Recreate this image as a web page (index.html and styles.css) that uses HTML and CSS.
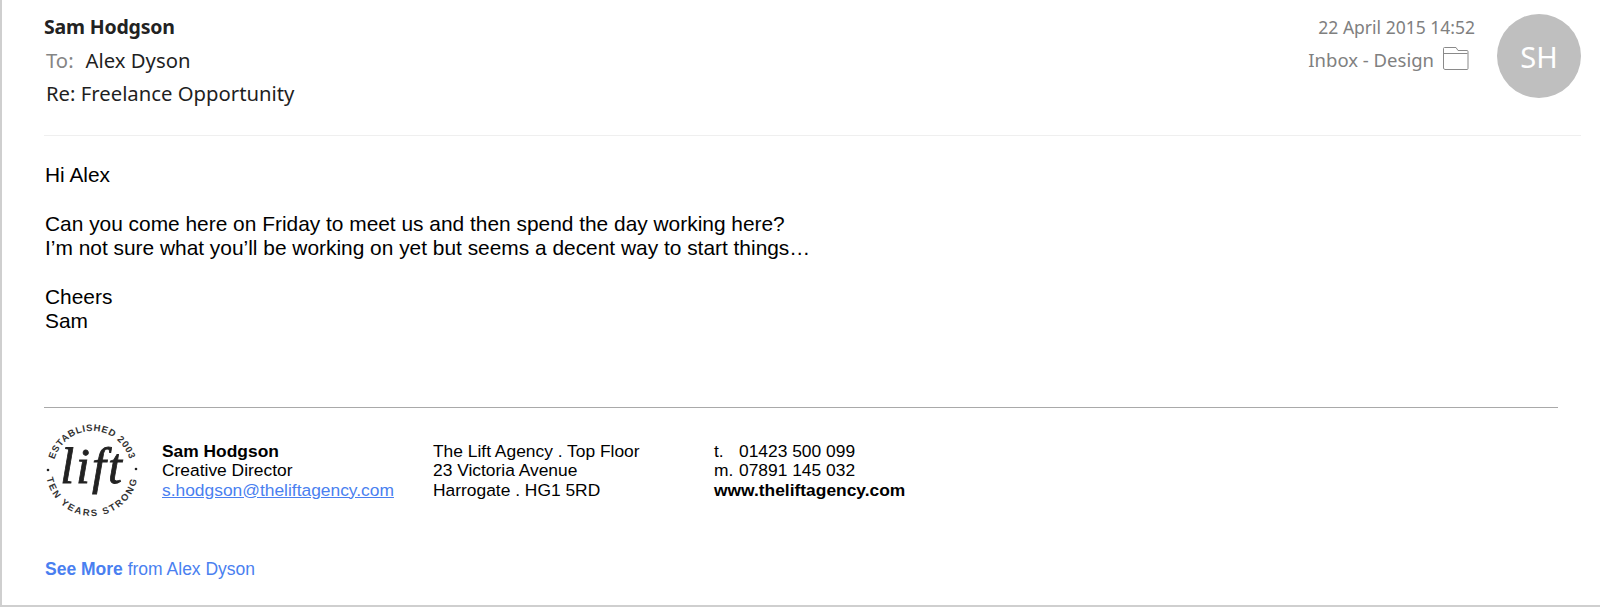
FILE: index.html
```html
<!DOCTYPE html>
<html lang="en">
<head>
<meta charset="utf-8">
<title>Re: Freelance Opportunity</title>
<link rel="stylesheet" href="styles.css">
</head>
<body>
<main class="mail">
  <header class="head">
    <div class="meta">
      <div class="sender">Sam Hodgson</div>
      <div class="to"><span class="to-label">To:</span><span>Alex Dyson</span></div>
      <div class="subject">Re: Freelance Opportunity</div>
    </div>
    <div class="info">
      <div class="date">22 April 2015 14:52</div>
      <div class="folder">Inbox - Design
        <svg class="folder-icon" width="27" height="24" viewBox="0 0 27 24" fill="none" stroke="#8a8a8a" stroke-width="1"><path d="M1.500 21.500V1.500a1 1 0 0 1 1-1h11.500l2 3h9a1 1 0 0 1 1 1v17a1 1 0 0 1-1 1h-22a1 1 0 0 1-1-1z"/><path d="M1.500 6.500h24"/></svg>
      </div>
    </div>
    <div class="avatar">SH</div>
  </header>

  <section class="body">
    <p>Hi Alex</p>
    <p>Can you come here on Friday to meet us and then spend the day working here?<br>I’m not sure what you’ll be working on yet but seems a decent way to start things…</p>
    <p>Cheers<br>Sam</p>
  </section>

  <footer class="sig">
    <svg class="logo" width="100" height="100" viewBox="0 0 100 100">
      <defs>
        <path id="arc-top" d="M11 50A39 39 0 1 1 89 50"/>
        <path id="arc-bottom" d="M4 50A46 46 0 0 0 96 50"/>
      </defs>
      <text class="logo-ring logo-ring-top"><textPath href="#arc-top" startOffset="50%" text-anchor="middle">ESTABLISHED 2003</textPath></text>
      <text class="logo-ring logo-ring-bottom"><textPath href="#arc-bottom" startOffset="50%" text-anchor="middle">TEN YEARS STRONG</textPath></text>
      <circle cx="6" cy="50" r="1.300" fill="#222"/>
      <circle cx="94" cy="49" r="1.300" fill="#222"/>
      <text class="logo-word" x="50" y="62.500" text-anchor="middle">lift</text>
    </svg>
    <div class="col col-name">
      <strong>Sam Hodgson</strong><br>Creative Director<br><a href="#">s.hodgson@theliftagency.com</a>
    </div>
    <div class="col col-addr">
      The Lift Agency . Top Floor<br>23 Victoria Avenue<br>Harrogate . HG1 5RD
    </div>
    <div class="col col-contact">
      <span class="tel">t.</span>01423 500 099<br><span class="tel">m.</span>07891 145 032<br><strong>www.theliftagency.com</strong>
    </div>
  </footer>

  <div class="more"><strong>See More</strong> from Alex Dyson</div>
</main>
</body>
</html>
```

FILE: styles.css
```css
* { box-sizing: border-box; }
html, body { margin: 0; height: 100%; background: #fff; }
body { overflow: hidden; }
.mail {
  width: 1600px;
  height: 607px;
  border-left: 2px solid #cfcfcf;
  border-bottom: 2px solid #cfcfcf;
  padding-left: 42px;
  font-family: "Liberation Sans", Arial, sans-serif;
  color: #000;
}
.head {
  display: flex;
  align-items: flex-start;
  width: 1537px;
  height: 136px;
  border-bottom: 1px solid #efefef;
  font-family: "Noto Sans", sans-serif;
  font-size: 20.300px;
  color: #1f1f1f;
}
.meta { flex: 1; padding-top: 14px; }
.sender { font-weight: 700; font-size: 19.500px; line-height: 26px; letter-spacing: -0.2px; color: #222; }
.to { display: flex; gap: 12px; margin-top: 6px; margin-left: 2px; line-height: 28px; }
.to-label { color: #858585; }
.subject { margin-top: 5px; margin-left: 2px; line-height: 28px; }
.info { padding-top: 15px; text-align: right; color: #808080; margin-right: 21px; }
.date { font-size: 17.500px; line-height: 24px; margin-right: 1px; }
.folder { display: flex; align-items: center; justify-content: flex-end; gap: 8px; font-size: 18.500px; margin-top: 9px; line-height: 24px; margin-right: 7px; }
.folder-icon { display: block; flex: none; margin-top: -3px; }
.avatar {
  width: 84px;
  height: 84px;
  margin-top: 14px;
  border-radius: 50%;
  background: #bfbfbf;
  color: #fff;
  font-size: 29px;
  display: flex;
  align-items: center;
  justify-content: center;
}
.body { padding: 27px 0 0 1px; font-size: 20.900px; line-height: 24.500px; height: 272px; border-bottom: 1px solid #a9a9a9; width: 1514px; }
.body p { margin: 0 0 24px; }
.sig {
  display: flex;
  align-items: flex-start;
  padding: 9px 0 0 0;
  font-size: 17.400px;
  line-height: 19.300px;
  height: 151px;
}
.col { padding-top: 25px; }
.col-name { margin-left: 20px; width: 271px; }
.col-addr { width: 281px; }
.col a { color: #4a7ff0; }
.tel { display: inline-block; width: 25px; }
.logo { display: block; flex: none; margin-left: -2px; margin-top: 3px; }
.logo-ring { font-family: "Liberation Sans", sans-serif; font-size: 9.500px; font-weight: 700; fill: #333; }
.logo-ring-top { letter-spacing: .7px; }
.logo-ring-bottom { letter-spacing: 1.900px; }
.logo-word { font-family: "Liberation Serif", serif; font-style: italic; font-size: 50px; letter-spacing: 2px; fill: #222; stroke: #222; stroke-width: .8px; }
.more { margin-left: 1px; font-size: 17.500px; line-height: 20px; color: #4a7ff0; }
```
